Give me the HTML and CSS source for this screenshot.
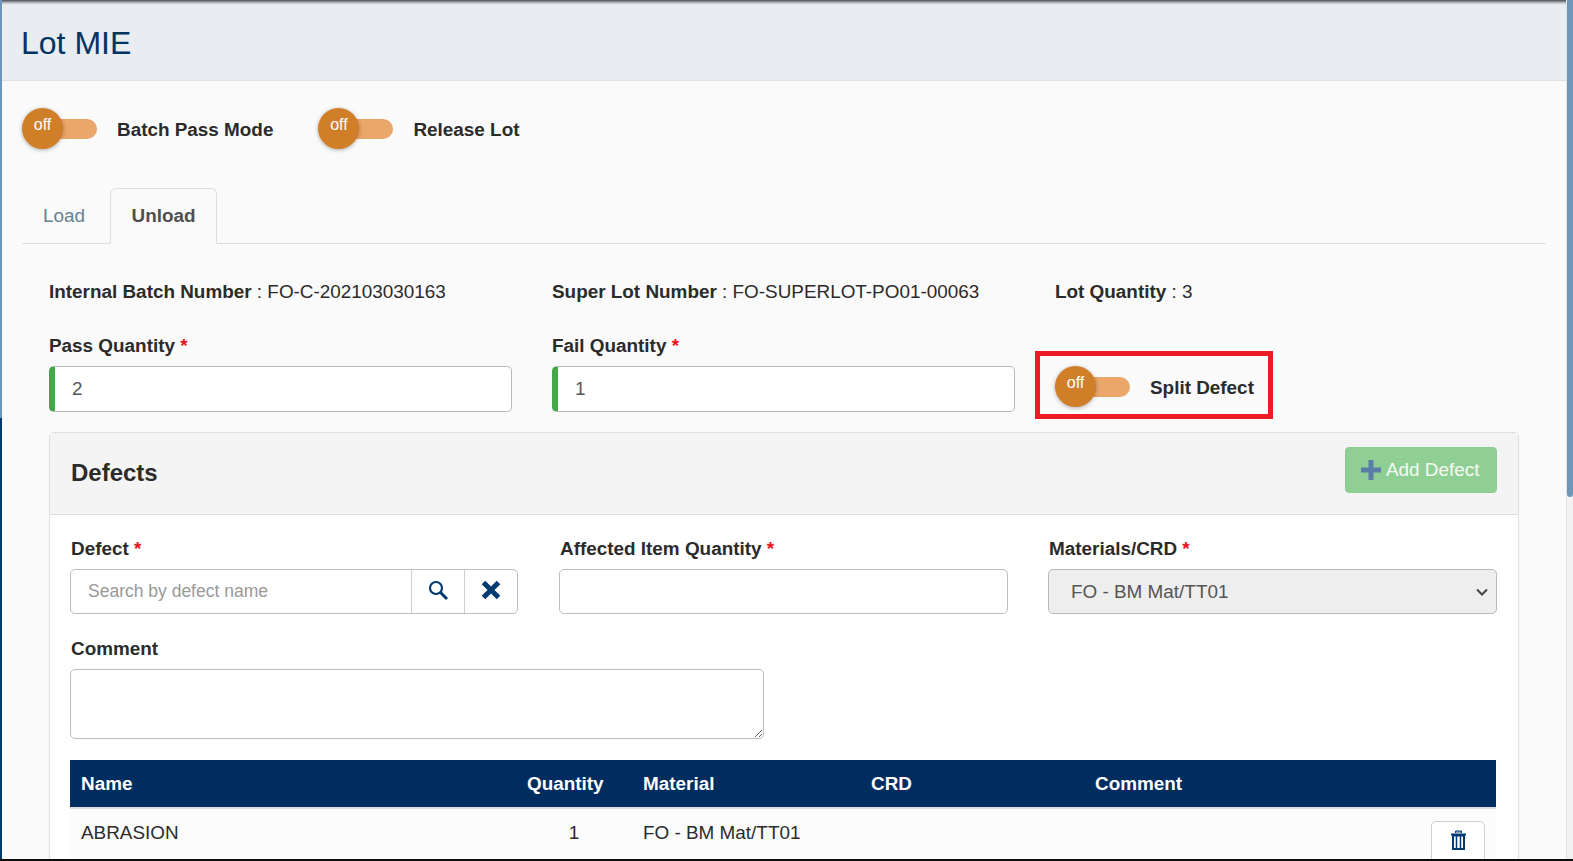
FILE: index.html
```html
<!DOCTYPE html>
<html>
<head>
    <meta charset="UTF-8">
    <title>Lot MIE</title>
    <link rel="stylesheet" href="styles.css">
</head>
<body>
    <div class="screen">
        <div class="side-strip">
            <div class="strip-top"></div>
            <div class="strip-bottom"></div>
        </div>

        <div class="page">
            <div class="page-header">
                <h1>Lot MIE</h1>
            </div>

            <div class="page-body">
                <div class="switch-row">
                    <div class="switch-item batch-switch">
                        <span class="switch"><span class="knob">off</span></span>
                        <span class="switch-label">Batch Pass Mode</span>
                    </div>
                    <div class="switch-item">
                        <span class="switch"><span class="knob">off</span></span>
                        <span class="switch-label">Release Lot</span>
                    </div>
                </div>

                <div class="tabs">
                    <a class="tab load-tab">Load</a>
                    <a class="tab active">Unload</a>
                </div>

                <div class="lot-panel">
                    <div class="lot-row info-row">
                        <div><b>Internal Batch Number</b> : FO-C-202103030163</div>
                        <div><b>Super Lot Number</b> : FO-SUPERLOT-PO01-00063</div>
                        <div><b>Lot Quantity</b> : 3</div>
                    </div>

                    <div class="lot-row qty-row">
                        <div class="field">
                            <label>Pass Quantity <span class="req">*</span></label>
                            <input class="qty-input" type="text" value="2">
                        </div>
                        <div class="field">
                            <label>Fail Quantity <span class="req">*</span></label>
                            <input class="qty-input" type="text" value="1">
                        </div>
                        <div class="split-box">
                            <span class="switch"><span class="knob">off</span></span>
                            <span class="switch-label">Split Defect</span>
                        </div>
                    </div>

                    <div class="card">
                        <div class="card-header">
                            <h2>Defects</h2>
                            <button class="add-btn">
                                <svg class="plus-icon" viewBox="0 0 20 20"><path d="M7.5 0h5v7.5H20v5h-7.5V20h-5v-7.5H0v-5h7.5z"/></svg>
                                Add Defect
                            </button>
                        </div>

                        <div class="card-body">
                            <div class="defect-row">
                                <div class="field">
                                    <label>Defect <span class="req">*</span></label>
                                    <div class="input-group">
                                        <input type="text" placeholder="Search by defect name">
                                        <span class="addon">
                                            <svg width="21" height="21" viewBox="0 0 21 21"><circle cx="8" cy="8" r="6" fill="none" stroke="#003a70" stroke-width="2.2"/><path d="M12.5 12.5l6.5 6.5" stroke="#003a70" stroke-width="3" fill="none"/></svg>
                                        </span>
                                        <span class="addon">
                                            <svg width="20" height="20" viewBox="0 0 20 20"><path d="M2.5 2.5l15 15M17.5 2.5l-15 15" stroke="#003a70" stroke-width="5" fill="none"/></svg>
                                        </span>
                                    </div>
                                </div>
                                <div class="field">
                                    <label>Affected Item Quantity <span class="req">*</span></label>
                                    <input class="plain-input" type="text">
                                </div>
                                <div class="field">
                                    <label>Materials/CRD <span class="req">*</span></label>
                                    <div class="fake-select">
                                        <span>FO - BM Mat/TT01</span>
                                        <svg width="12" height="8" viewBox="0 0 12 8"><path d="M1 1.5l5 5 5-5" stroke="#444" stroke-width="2" fill="none"/></svg>
                                    </div>
                                </div>
                            </div>

                            <div class="comment-field">
                                <label>Comment</label>
                                <textarea></textarea>
                            </div>

                            <table class="defect-table">
                                <thead>
                                    <tr>
                                        <th class="col-name">Name</th>
                                        <th class="col-qty">Quantity</th>
                                        <th class="col-mat">Material</th>
                                        <th class="col-crd">CRD</th>
                                        <th>Comment</th>
                                        <th class="col-act"></th>
                                    </tr>
                                </thead>
                                <tbody>
                                    <tr>
                                        <td>ABRASION</td>
                                        <td class="col-qty">1</td>
                                        <td>FO - BM Mat/TT01</td>
                                        <td></td>
                                        <td></td>
                                        <td class="col-act">
                                            <button class="trash-btn">
                                                <svg width="15" height="20" viewBox="0 0 15 20"><path d="M4.5 3V1h6v2" fill="#8fa6bd" stroke="#003a70" stroke-width="1"/><path d="M0 3.5h15v2H0z" fill="#003a70"/><path d="M2 5.5h11V19H2z" fill="#fff" stroke="#003a70" stroke-width="2"/><path d="M5.5 6v12M9.5 6v12" stroke="#003a70" stroke-width="1.5"/></svg>
                                            </button>
                                        </td>
                                    </tr>
                                </tbody>
                            </table>
                        </div>
                    </div>
                </div>
            </div>
        </div>

        <div class="scroll-strip"><div class="scroll-thumb"></div></div>
    </div>
</body>
</html>
```

FILE: styles.css
```css
* {
    box-sizing: border-box;
}
html, body {
    margin: 0;
    height: 100%;
    overflow: hidden;
}
body {
    font-family: "Liberation Sans", Arial, sans-serif;
    font-size: 18.9px;
    color: #2b2b2b;
    background: #fafafa;
}
.screen {
    display: flex;
    height: 861px;
    overflow: hidden;
    border-bottom: 2px solid #0b0b0b;
}
.side-strip {
    width: 2px;
    flex: none;
    display: flex;
    flex-direction: column;
}
.strip-top {
    height: 418px;
    background: #6d96b8;
}
.strip-bottom {
    flex: 1;
    background: #003a6c;
}
.page {
    flex: 1;
    min-width: 0;
}
.page-header {
    height: 81px;
    padding: 25px 0 0 19px;
    background: linear-gradient(#4a4d52 0, #9a9da2 2px, #dfe2e7 4px, #e9ecf1 6px);
    border-bottom: 1px solid #dfe3e8;
}
h1 {
    margin: 0;
    font-size: 32px;
    font-weight: 400;
    line-height: 36px;
    color: #003366;
}
.page-body {
    padding: 0 20px 0 20px;
}
.switch-row {
    display: flex;
    padding-top: 27px;
}
.switch-item {
    display: flex;
    align-items: center;
}
.batch-switch {
    margin-right: 45px;
}
.switch {
    position: relative;
    display: block;
    width: 75px;
    height: 20px;
    margin: 11px 20px 11px 0;
    border-radius: 10px;
    background: #eba669;
    flex: none;
}
.knob {
    position: absolute;
    left: 0;
    top: -11px;
    width: 41px;
    height: 41px;
    padding-top: 8px;
    border-radius: 50%;
    background: #d07e28;
    box-shadow: 0 1px 4px rgba(0,0,0,0.3);
    color: #fff;
    font-size: 16px;
    line-height: 18px;
    text-align: center;
}
.switch-label {
    padding-top: 2px;
    font-weight: 700;
    white-space: nowrap;
}
.tabs {
    display: flex;
    height: 56px;
    margin-top: 38px;
    border-bottom: 1px solid #dedede;
}
.tab {
    height: 56px;
    padding: 16px 20.5px 0;
    color: #66808f;
    border: 1px solid transparent;
    line-height: 22px;
}
.load-tab {
    width: 88px;
    padding-left: 20px;
}
.tab.active {
    color: #4f4f4f;
    font-weight: 700;
    background: #fafafa;
    border-color: #dedede;
    border-bottom-color: #fafafa;
    border-radius: 6px 6px 0 0;
}
.lot-panel {
    padding: 0 0 0 27px;
}
.lot-row {
    display: grid;
    grid-template-columns: 463px 463px 1fr;
    column-gap: 40px;
}
.info-row {
    margin-top: 37px;
    line-height: 22px;
}
.info-row b {
    font-weight: 700;
}
.qty-row {
    margin-top: 32px;
    height: 97px;
    position: relative;
}
.field label,
.comment-field label {
    display: block;
    margin-left: 1px;
    padding-top: 1px;
    font-weight: 700;
    line-height: 22px;
    margin-bottom: 9px;
}
.qty-row .field label {
    margin-left: 0;
    padding-top: 0;
    margin-bottom: 9px;
}
.req {
    color: #e8141c;
}
.qty-input {
    display: block;
    width: 100%;
    height: 46px;
    padding: 0 17px;
    border: 1px solid #b9b9b9;
    border-left: 6px solid #43a84a;
    border-radius: 5px;
    background: #fff;
    color: #555;
    font: 18.9px "Liberation Sans", Arial, sans-serif;
}
.split-box {
    display: flex;
    align-items: center;
    width: 238px;
    height: 68px;
    margin: 16px 0 0 -20px;
    padding: 4px 0 0 15px;
    border: 5px solid #ed1c24;
}
.card {
    width: 1470px;
    border: 1px solid #dedede;
    border-radius: 5px 5px 0 0;
    background: #fff;
}
.card-header {
    display: flex;
    justify-content: space-between;
    align-items: flex-start;
    height: 82px;
    padding: 14px 21px 0 21px;
    background: #f4f4f4;
    border-bottom: 1px solid #dedede;
}
h2 {
    margin: 12px 0 0;
    font-size: 24px;
    line-height: 28px;
    font-weight: 700;
    color: #2b2b2b;
}
.add-btn {
    display: flex;
    align-items: center;
    width: 152px;
    height: 46px;
    padding: 0 0 0 15px;
    border: 1px solid #8dcc90;
    border-radius: 4px;
    background: #90cf93;
    color: #f3faf3;
    font: 18.9px "Liberation Sans", Arial, sans-serif;
}
.plus-icon {
    width: 20px;
    height: 20px;
    margin-right: 5px;
    fill: #5a7ea8;
}
.card-body {
    padding: 22px 20px 0;
}
.defect-row {
    display: grid;
    grid-template-columns: repeat(3, 449px);
    column-gap: 40px;
}
.input-group {
    display: flex;
    width: 448px;
    height: 45px;
    border: 1px solid #bdbdbd;
    border-radius: 5px;
    background: #fff;
}
.input-group input {
    flex: 1;
    min-width: 0;
    border: 0;
    padding: 0 17px;
    background: transparent;
    font: 17.5px "Liberation Sans", Arial, sans-serif;
}
.input-group input::placeholder {
    color: #999;
}
.addon {
    display: flex;
    align-items: center;
    justify-content: center;
    width: 53px;
    flex: none;
    border-left: 1px solid #cfcfcf;
    padding-bottom: 3px;
}
.plain-input {
    display: block;
    width: 100%;
    height: 45px;
    border: 1px solid #bdbdbd;
    border-radius: 5px;
    background: #fff;
}
.fake-select {
    display: flex;
    align-items: center;
    justify-content: space-between;
    height: 45px;
    padding: 0 8px 0 22px;
    border: 1px solid #b9b9b9;
    border-radius: 5px;
    background: #eee;
    color: #555;
}
.comment-field {
    margin-top: 23px;
}
textarea {
    display: block;
    width: 694px;
    height: 70px;
    border: 1px solid #bdbdbd;
    border-radius: 5px;
    background: #fff;
}
.defect-table {
    width: 1426px;
    margin-top: 21px;
    border-collapse: collapse;
    table-layout: fixed;
}
.defect-table th {
    height: 48px;
    padding: 0 11px 0 12px;
    background: #002d5f;
    color: #fff;
    text-align: left;
    border-bottom: 2px solid #e0e0e0;
}
.defect-table th.col-name {
    padding-left: 11px;
}
.defect-table td {
    height: 60px;
    padding: 13px 11px 0 12px;
    background: #fcfcfc;
    vertical-align: top;
    line-height: 22px;
}
.defect-table td:first-child {
    padding-left: 11px;
}
.col-name {
    width: 445px;
}
.col-qty {
    width: 116px;
}
.defect-table td.col-qty {
    padding-left: 14px;
    padding-right: 12px;
    text-align: center;
}
.col-mat {
    width: 228px;
}
.col-crd {
    width: 224px;
}
.col-act {
    width: 120px;
}
.defect-table td.col-act {
    padding: 12px 11px 0 0;
    text-align: right;
}
.trash-btn {
    width: 54px;
    height: 46px;
    padding: 0 0 6px;
    border: 1px solid #cfcfcf;
    border-radius: 5px;
    background: #fff;
}
.scroll-strip {
    width: 7px;
    flex: none;
    background: #f2f2f2;
    border-left: 1px solid #e3e3e3;
}
.scroll-thumb {
    height: 497px;
    border-radius: 0 0 3px 3px;
    background: #6d96b8;
}
```
